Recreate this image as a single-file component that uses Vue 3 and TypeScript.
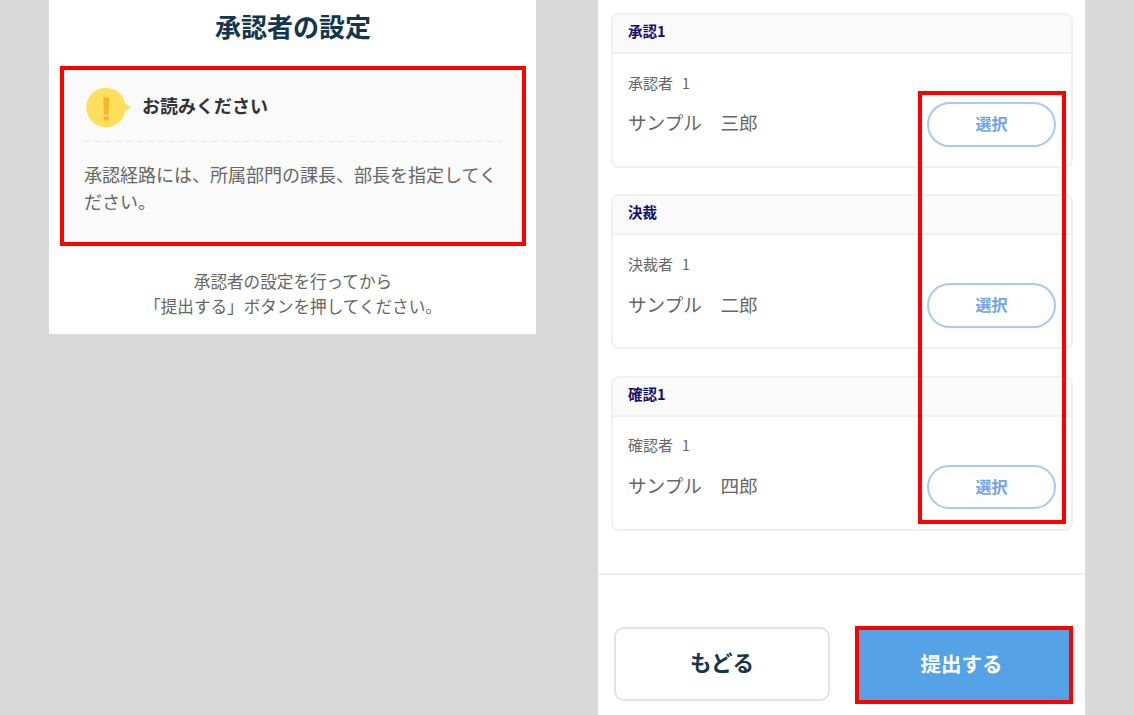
<script setup lang="ts">
interface Card {
  head: string
  role: string
  name: string
}
const cards: Card[] = [
  { head: '承認1', role: '承認者', name: 'サンプル　三郎' },
  { head: '決裁', role: '決裁者', name: 'サンプル　二郎' },
  { head: '確認1', role: '確認者', name: 'サンプル　四郎' },
]
</script>

<template>
  <div class="page">
    <section class="left">
      <h1 class="title">承認者の設定</h1>
      <div class="notice">
        <div class="notice-head">
          <svg class="icon" width="46" height="42" viewBox="0 0 46 42" aria-hidden="true">
            <circle cx="20" cy="20.5" r="19.7" fill="#ffdf5c" />
            <path d="M38 16.5 L45.5 20.5 L38 24.5 Z" fill="#ffdf5c" />
            <path d="M17.3 10.5 H23.3 L22.6 27.5 H18 Z" fill="#f5b52e" />
            <rect x="17.6" y="29.5" width="5.4" height="4" fill="#f5b52e" />
          </svg>
          <span class="notice-title">お読みください</span>
        </div>
        <p class="notice-text">承認経路には、所属部門の課長、部長を指定してください。</p>
      </div>
      <p class="hint">承認者の設定を行ってから<br />「提出する」ボタンを押してください。</p>
    </section>

    <section class="right">
      <div class="cards">
        <article v-for="card in cards" :key="card.head" class="card">
          <header class="card-head">{{ card.head }}</header>
          <div class="card-body">
            <div class="person">
              <div class="label">{{ card.role }}<span class="no">1</span></div>
              <div class="name">{{ card.name }}</div>
            </div>
            <button class="select" type="button">選択</button>
          </div>
        </article>
      </div>
      <div class="footer">
        <button class="back" type="button">もどる</button>
        <button class="submit" type="button">提出する</button>
      </div>
      <div class="mark"></div>
    </section>
  </div>
</template>

<style>
html,
body {
  margin: 0;
  background: #d9d9d9;
}
</style>

<style scoped>
.page {
  display: flex;
  align-items: flex-start;
  gap: 62px;
  width: 1134px;
  height: 715px;
  padding-left: 49px;
  box-sizing: border-box;
  overflow: hidden;
  background: #d9d9d9;
  font-family: "Noto Sans CJK JP", "Noto Sans", sans-serif;
}
.left {
  width: 487px;
  height: 334px;
  flex: none;
  background: #fff;
  padding: 0 10px 0 11px;
  box-sizing: border-box;
}
.title {
  margin: 0;
  height: 66px;
  padding-top: 8px;
  box-sizing: border-box;
  font-size: 26px;
  line-height: 36px;
  font-weight: 700;
  text-align: center;
  color: #12364d;
}
.notice {
  height: 180px;
  box-sizing: border-box;
  border: 4px solid #f00;
  background: #fafafa;
  padding: 17px 21px 0 20px;
}
.notice-head {
  display: flex;
  align-items: center;
  height: 55px;
  padding-bottom: 14px;
  padding-left: 2px;
  box-sizing: border-box;
  background: repeating-linear-gradient(to right, #e6e6e6 0 6px, transparent 6px 10.6px) left bottom / 100% 1px no-repeat;
}
.icon {
  flex: none;
}
.notice-title {
  margin-left: 10px;
  margin-bottom: 6px;
  font-size: 18px;
  font-weight: 700;
  color: #333;
}
.notice-text {
  margin: 19px 0 0;
  font-size: 18px;
  line-height: 27px;
  color: #666;
}
.hint {
  margin: 23px 0 0;
  font-size: 16.6px;
  line-height: 25px;
  text-align: center;
  color: #666;
}
.right {
  position: relative;
  width: 487px;
  height: 715px;
  flex: none;
  background: #fff;
  display: flex;
  flex-direction: column;
}
.cards {
  display: flex;
  flex-direction: column;
  gap: 26.4px;
  padding: 13px 12px 42.7px 13px;
  border-bottom: 2px solid #f0f0f0;
}
.card {
  height: 155px;
  box-sizing: border-box;
  border: 2px solid #f0f0f0;
  border-radius: 8px;
  overflow: hidden;
}
.card-head {
  height: 39px;
  box-sizing: border-box;
  background: #fafafa;
  border-bottom: 2px solid #f0f0f0;
  padding-left: 15px;
  font-size: 14.5px;
  line-height: 32.5px;
  font-weight: 700;
  color: #10106b;
}
.card-body {
  display: flex;
  justify-content: space-between;
  padding: 0 15px;
}
.person {
  padding-top: 18.6px;
}
.label {
  font-size: 15px;
  line-height: 20px;
  color: #666;
}
.no {
  margin-left: 9px;
  font-size: 14px;
}
.name {
  margin-top: 16.6px;
  font-size: 18.6px;
  line-height: 26px;
  color: #666;
}
.select {
  width: 129px;
  height: 44.5px;
  margin-top: 48px;
  padding: 0 0 3px;
  box-sizing: border-box;
  background: #fff;
  border: 2px solid #a9c9f6;
  border-radius: 23px;
  font: inherit;
  font-size: 16px;
  font-weight: 700;
  color: #6fa3ea;
}
.footer {
  display: flex;
  align-items: center;
  padding: 50.5px 12px 0 16px;
}
.back {
  width: 216px;
  height: 74px;
  margin-top: -2px;
  padding: 0 0 5px;
  box-sizing: border-box;
  background: #fff;
  border: 2px solid #e3e3e3;
  border-radius: 10px;
  font: inherit;
  font-size: 21.5px;
  font-weight: 700;
  color: #12364d;
}
.submit {
  width: 218px;
  height: 78px;
  margin-left: 25px;
  padding: 0 5px 4px 0;
  box-sizing: border-box;
  background: #55a3e6;
  border: 4px solid #f00;
  font: inherit;
  font-size: 20.5px;
  font-weight: 700;
  color: #fff;
}
.mark {
  position: absolute;
  left: 320px;
  top: 91px;
  width: 148px;
  height: 433px;
  box-sizing: border-box;
  border: 4px solid #f00;
  pointer-events: none;
}
</style>
